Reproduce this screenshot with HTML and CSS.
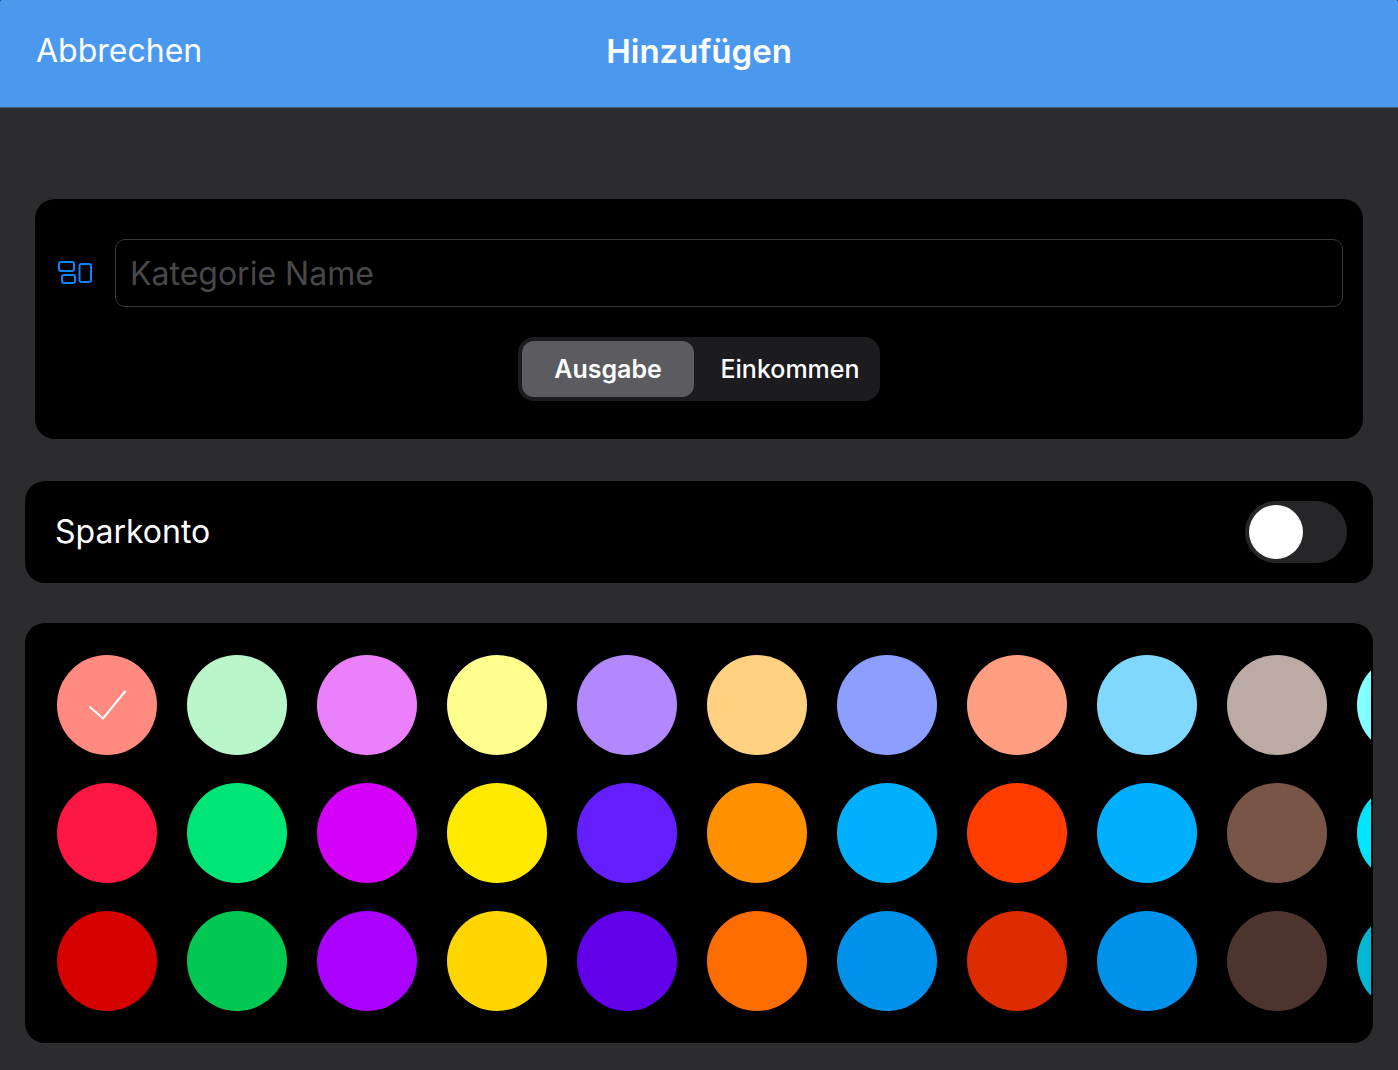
FILE: index.html
```html
<!DOCTYPE html>
<html lang="de">
<head>
<meta charset="utf-8">
<meta name="viewport" content="width=device-width, initial-scale=1">
<title>Hinzufügen</title>
<link rel="stylesheet" href="styles.css">
</head>
<body>
<header class="navbar">
  <button class="cancel" type="button">Abbrechen</button>
  <h1 class="title">Hinzufügen</h1>
</header>
<main class="form">
  <section class="card details">
    <div class="name-row">
      <label class="name-icon" for="name" aria-label="Kategorie Name">
        <svg width="36" height="24" viewBox="0 0 36 24" fill="none" stroke="#0a84ff" stroke-width="2">
          <rect x="2" y="1" width="15" height="9" rx="2"/>
          <rect x="5" y="14" width="13" height="8" rx="2"/>
          <rect x="22.500" y="3" width="11.500" height="18" rx="2"/>
        </svg>
      </label>
      <input class="name" id="name" type="text" placeholder="Kategorie Name">
    </div>
    <div class="segments" role="radiogroup" aria-label="Art">
      <label class="segment"><input type="radio" name="kind" checked><span>Ausgabe</span></label>
      <label class="segment"><input type="radio" name="kind"><span>Einkommen</span></label>
    </div>
  </section>
  <section class="card savings">
    <label class="savings-label" for="savings">Sparkonto</label>
    <input class="switch" id="savings" type="checkbox" role="switch">
  </section>
  <section class="card colors">
    <div class="swatches" role="radiogroup" aria-label="Farbe">
      <label class="swatch" style="background:#ff8a80"><input type="radio" name="color" aria-label="Farbe 1" checked><svg class="check" width="100" height="100" viewBox="0 0 100 100" fill="none" stroke="#fff" stroke-width="2" stroke-linecap="round" stroke-linejoin="round"><path d="M33 52L46 63.500L68 36.500"/></svg></label>
      <label class="swatch" style="background:#ff1744"><input type="radio" name="color" aria-label="Farbe 2"></label>
      <label class="swatch" style="background:#d50000"><input type="radio" name="color" aria-label="Farbe 3"></label>
      <label class="swatch" style="background:#b9f6ca"><input type="radio" name="color" aria-label="Farbe 4"></label>
      <label class="swatch" style="background:#00e676"><input type="radio" name="color" aria-label="Farbe 5"></label>
      <label class="swatch" style="background:#00c853"><input type="radio" name="color" aria-label="Farbe 6"></label>
      <label class="swatch" style="background:#ea80fc"><input type="radio" name="color" aria-label="Farbe 7"></label>
      <label class="swatch" style="background:#d500f9"><input type="radio" name="color" aria-label="Farbe 8"></label>
      <label class="swatch" style="background:#aa00ff"><input type="radio" name="color" aria-label="Farbe 9"></label>
      <label class="swatch" style="background:#ffff8d"><input type="radio" name="color" aria-label="Farbe 10"></label>
      <label class="swatch" style="background:#ffea00"><input type="radio" name="color" aria-label="Farbe 11"></label>
      <label class="swatch" style="background:#ffd600"><input type="radio" name="color" aria-label="Farbe 12"></label>
      <label class="swatch" style="background:#b388ff"><input type="radio" name="color" aria-label="Farbe 13"></label>
      <label class="swatch" style="background:#651fff"><input type="radio" name="color" aria-label="Farbe 14"></label>
      <label class="swatch" style="background:#6200ea"><input type="radio" name="color" aria-label="Farbe 15"></label>
      <label class="swatch" style="background:#ffd180"><input type="radio" name="color" aria-label="Farbe 16"></label>
      <label class="swatch" style="background:#ff9100"><input type="radio" name="color" aria-label="Farbe 17"></label>
      <label class="swatch" style="background:#ff6d00"><input type="radio" name="color" aria-label="Farbe 18"></label>
      <label class="swatch" style="background:#8c9eff"><input type="radio" name="color" aria-label="Farbe 19"></label>
      <label class="swatch" style="background:#00b0ff"><input type="radio" name="color" aria-label="Farbe 20"></label>
      <label class="swatch" style="background:#0091ea"><input type="radio" name="color" aria-label="Farbe 21"></label>
      <label class="swatch" style="background:#ff9e80"><input type="radio" name="color" aria-label="Farbe 22"></label>
      <label class="swatch" style="background:#ff3d00"><input type="radio" name="color" aria-label="Farbe 23"></label>
      <label class="swatch" style="background:#dd2c00"><input type="radio" name="color" aria-label="Farbe 24"></label>
      <label class="swatch" style="background:#80d8ff"><input type="radio" name="color" aria-label="Farbe 25"></label>
      <label class="swatch" style="background:#00b0ff"><input type="radio" name="color" aria-label="Farbe 26"></label>
      <label class="swatch" style="background:#0091ea"><input type="radio" name="color" aria-label="Farbe 27"></label>
      <label class="swatch" style="background:#bcaaa4"><input type="radio" name="color" aria-label="Farbe 28"></label>
      <label class="swatch" style="background:#795548"><input type="radio" name="color" aria-label="Farbe 29"></label>
      <label class="swatch" style="background:#4e342e"><input type="radio" name="color" aria-label="Farbe 30"></label>
      <label class="swatch" style="background:#84ffff"><input type="radio" name="color" aria-label="Farbe 31"></label>
      <label class="swatch" style="background:#00e5ff"><input type="radio" name="color" aria-label="Farbe 32"></label>
      <label class="swatch" style="background:#00b8d4"><input type="radio" name="color" aria-label="Farbe 33"></label>
    </div>
  </section>
</main>
</body>
</html>
```
FILE: styles.css
```css
* {
  box-sizing: border-box;
}

body {
  margin: 0;
  background: #2c2c2e;
  color: #fff;
  font-family: Inter, "Liberation Sans", sans-serif;
  font-size: 32px;
  line-height: 40px;
}

button,
input {
  margin: 0;
  font: inherit;
  color: inherit;
}

.navbar {
  display: grid;
  grid-template-columns: 1fr auto 1fr;
  align-items: start;
  padding: 31px 36px 36px;
  background: #4b98ef;
  border-bottom: 1px solid #4a6078;
  border-radius: 2px 2px 0 0;
}

.cancel {
  justify-self: start;
  padding: 0;
  border: 0;
  background: none;
}

.title {
  margin: 0;
  font-size: 33px;
  font-weight: 600;
}

.form {
  padding: 91px 25px 27px;
}

.card {
  background: #000;
  border-radius: 20px;
}

.details {
  margin: 0 10px 42px;
  padding: 40px 20px 38px;
}

.name-row {
  display: flex;
  align-items: center;
  gap: 22px;
  margin-bottom: 30px;
}

.name-icon {
  display: flex;
  padding-left: 2px;
}

.name {
  flex: 1;
  min-width: 0;
  height: 68px;
  padding: 0 14px;
  border: 1px solid #38383a;
  border-radius: 10px;
  background: #000;
}

.name::placeholder {
  color: #48484a;
  opacity: 1;
}

.segments {
  display: grid;
  grid-template-columns: 172px 172px;
  gap: 10px;
  width: fit-content;
  margin: 0 auto;
  padding: 4px;
  border-radius: 16px;
  background: #1c1c1e;
  font-size: 25px;
  font-weight: 500;
}

.segment {
  display: grid;
}

.segment input,
.segment span {
  grid-area: 1 / 1;
}

.segment input {
  appearance: none;
  height: 56px;
  border-radius: 12px;
}

.segment input:checked {
  background: #5b5b60;
}

.segment input:checked + span {
  font-weight: 600;
}

.segment span {
  z-index: 1;
  place-self: center;
}

.savings {
  display: flex;
  align-items: center;
  justify-content: space-between;
  margin-bottom: 40px;
  padding: 20px 26px 20px 30px;
}

.switch {
  appearance: none;
  width: 102px;
  height: 62px;
  padding: 4px;
  border-radius: 31px;
  background: #262628;
}

.switch::before {
  content: "";
  display: block;
  width: 54px;
  height: 54px;
  border-radius: 50%;
  background: #fff;
}

.switch:checked {
  background: #30d158;
}

.switch:checked::before {
  margin-left: auto;
}

.colors {
  padding: 0 2px;
}

.swatches {
  display: grid;
  grid-auto-flow: column;
  grid-template-rows: repeat(3, 100px);
  grid-auto-columns: 100px;
  gap: 28px 30px;
  padding: 32px 30px;
  overflow-x: auto;
  scrollbar-width: none;
}

.swatch {
  display: grid;
  border-radius: 50%;
}

.swatch input,
.check {
  grid-area: 1 / 1;
}

.swatch input {
  appearance: none;
  border-radius: 50%;
}
```
